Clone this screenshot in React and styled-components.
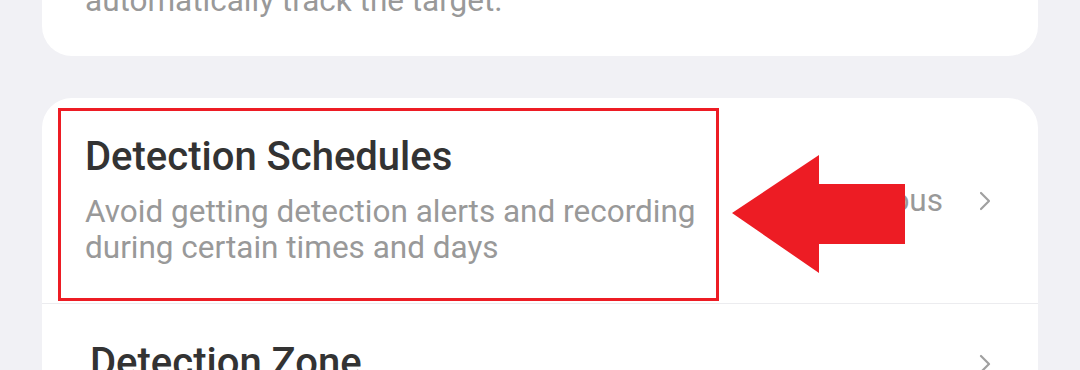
import React from 'react'
import styled, { createGlobalStyle } from 'styled-components'

const GlobalStyle = createGlobalStyle`
  html, body {
    margin: 0;
    padding: 0;
    background: #f1f1f5;
    font-family: Roboto, "Noto Sans", "Liberation Sans", sans-serif;
    -webkit-font-smoothing: antialiased;
  }
`

const Page = styled.div`
  width: 1080px;
  height: 370px;
  overflow: hidden;
  box-sizing: border-box;
  padding: 0 42px;
`

const Stack = styled.div`
  display: flex;
  flex-direction: column;
  gap: 42px;
  margin-top: -142px;
`

const Card = styled.div`
  background: #ffffff;
  border-radius: 30px;
  overflow: hidden;
`

const TopBody = styled.div`
  padding: 30px 43px 37px;
`

const Row = styled.div`
  position: relative;
  display: flex;
  align-items: center;
  gap: 24px;
  padding: 35px 47px 37px ${p => p.$inset || 43}px;
  border-bottom: ${p => (p.$last ? 'none' : '1px solid #ececef')};
`

const TextCol = styled.div`
  flex: 1;
  min-width: 0;
`

const Title = styled.div`
  color: #333333;
  font-size: 40px;
  font-weight: 500;
  line-height: 48px;
`

const Desc = styled.div`
  color: #999999;
  font-size: 31.5px;
  line-height: 36px;
  margin-top: ${p => (p.$wide ? 13 : 11)}px;
`

const Value = styled.span`
  color: #999999;
  font-size: 31.5px;
  white-space: nowrap;
`

const Chevron = styled.svg`
  width: 12px;
  height: 20px;
  margin-left: 36px;
  flex-shrink: 0;
`

const Highlight = styled.div`
  position: absolute;
  left: 16px;
  top: 10px;
  width: 661px;
  height: 193px;
  box-sizing: border-box;
  border: 3px solid #ed1c24;
  pointer-events: none;
`

const Arrow = styled.svg`
  position: absolute;
  left: 690px;
  top: 57px;
  width: 174px;
  height: 119px;
`

const RightSide = styled.div`
  display: flex;
  align-items: center;
  margin-top: 2px;
`

function ChevronIcon() {
  return (
    <Chevron viewBox="0 0 12 20">
      <path d="M2 2 L10 10 L2 18" fill="none" stroke="#a0a0a0" strokeWidth="2.2" strokeLinecap="round" strokeLinejoin="round" />
    </Chevron>
  )
}

export default function App() {
  return (
    <>
      <GlobalStyle />
      <Page>
        <Stack>
          <Card>
            <TopBody>
              <Title>Auto Tracking</Title>
              <Desc>
                When motion is detected, the camera will
                <br />
                automatically track the target.
              </Desc>
            </TopBody>
          </Card>

          <Card>
            <Row>
              <TextCol>
                <Title>Detection Schedules</Title>
                <Desc $wide>
                  Avoid getting detection alerts and recording
                  <br />
                  during certain times and days
                </Desc>
              </TextCol>
              <RightSide>
                <Value>Continuous</Value>
                <ChevronIcon />
              </RightSide>
              <Highlight />
              <Arrow viewBox="0 0 174 119">
                <polygon points="0,58 87,0 87,29 173,29 173,89 87,89 87,118" fill="#ed1c24" />
              </Arrow>
            </Row>
            <Row $last $inset={48}>
              <TextCol>
                <Title>Detection Zone</Title>
              </TextCol>
              <RightSide>
                <ChevronIcon />
              </RightSide>
            </Row>
          </Card>
        </Stack>
      </Page>
    </>
  )
}
